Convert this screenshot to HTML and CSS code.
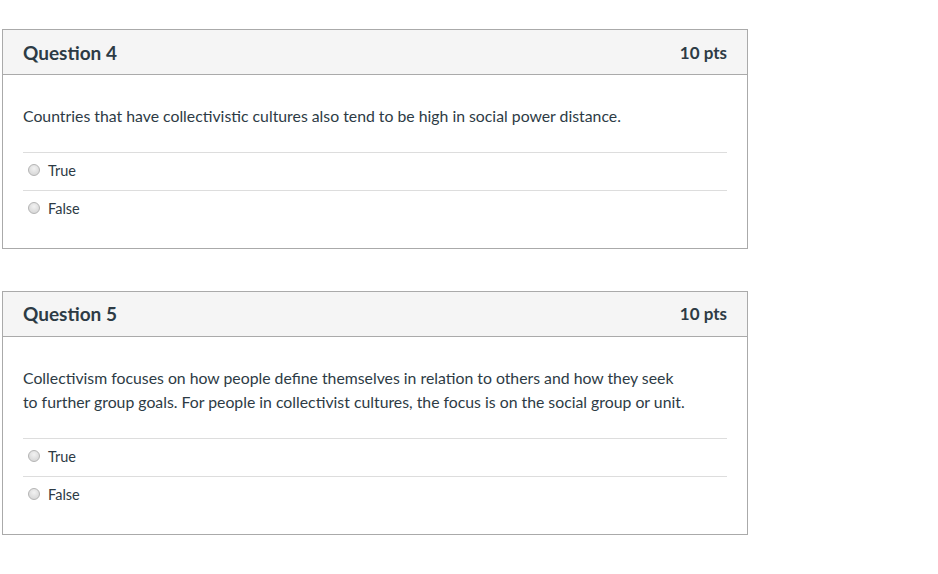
FILE: index.html
```html
<!DOCTYPE html>
<html>
<head>
<meta charset="utf-8">
<link rel="stylesheet" href="styles.css">
</head>
<body>
<div class="page">
  <div class="question">
    <div class="q-header">
      <span class="q-title">Question 4</span>
      <span class="q-pts">10 pts</span>
    </div>
    <div class="q-body">
      <div class="q-text"><p>Countries that have collectivistic cultures also tend to be high in social power distance.</p></div>
      <div class="answers">
        <label class="answer"><span class="radio"></span><span>True</span></label>
        <label class="answer"><span class="radio"></span><span>False</span></label>
      </div>
    </div>
  </div>
  <div class="question">
    <div class="q-header">
      <span class="q-title">Question 5</span>
      <span class="q-pts">10 pts</span>
    </div>
    <div class="q-body">
      <div class="q-text"><p>Collectivism focuses on how people define themselves in relation to others and how they seek to further group goals. For people in collectivist cultures, the focus is on the social group or unit.</p></div>
      <div class="answers">
        <label class="answer"><span class="radio"></span><span>True</span></label>
        <label class="answer"><span class="radio"></span><span>False</span></label>
      </div>
    </div>
  </div>
</div>
</body>
</html>
```
FILE: styles.css
```css
* { box-sizing: border-box; }
html, body { margin: 0; padding: 0; background: #fff; }
body {
  font-family: Lato, "Open Sans", sans-serif;
  color: #2d3b45;
}
.page {
  padding: 29px 0 0 2px;
  display: flex;
  flex-direction: column;
  gap: 42px;
}
.question {
  width: 746px;
  border: 1px solid #aaaaaa;
}
.q-header {
  height: 45px;
  background: #f5f5f5;
  border-bottom: 1px solid #aaaaaa;
  display: flex;
  align-items: center;
  justify-content: space-between;
  padding: 0 20px 0 20px;
}
.q-title {
  font-size: 19px;
  font-weight: bold;
}
.q-pts {
  font-size: 17px;
  font-weight: bold;
}
.q-body {
  padding: 29px 20px 20px;
}
.q-text p {
  margin: 0;
  font-size: 15.8px;
  line-height: 24.6px;
  width: 662px;
}
.answers {
  margin-top: 23px;
}
.answer {
  display: flex;
  align-items: center;
  height: 38px;
  border-top: 1px solid #dddddd;
  font-size: 14.5px;
  padding-left: 5px;
  padding-bottom: 2px;
  gap: 8px;
}
.radio {
  width: 12px;
  height: 12px;
  border-radius: 50%;
  border: 1px solid #b4b4b4;
  background: radial-gradient(circle at 50% 35%, #f2f2f2 0%, #dedede 60%, #d2d2d2 100%);
}
```
